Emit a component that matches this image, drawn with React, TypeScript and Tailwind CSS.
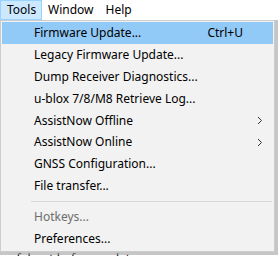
import React from 'react';

type Item = { label: string; shortcut?: string; sub?: boolean; active?: boolean; disabled?: boolean } | 'sep';

const ITEMS: Item[] = [
  { label: 'Firmware Update...', shortcut: 'Ctrl+U', active: true },
  { label: 'Legacy Firmware Update...' },
  { label: 'Dump Receiver Diagnostics...' },
  { label: 'u-blox 7/8/M8 Retrieve Log...' },
  { label: 'AssistNow Offline', sub: true },
  { label: 'AssistNow Online', sub: true },
  { label: 'GNSS Configuration...' },
  { label: 'File transfer...' },
  'sep',
  { label: 'Hotkeys...', disabled: true },
  { label: 'Preferences...' },
];

const Chevron = () => (
  <svg width="6" height="9" viewBox="0 0 6 9" className="text-[#333]">
    <path d="M1 1 L4.5 4.5 L1 8" fill="none" stroke="currentColor" strokeWidth="1" />
  </svg>
);

export default function App() {
  return (
    <div className="relative w-[278px] h-[256px] overflow-hidden bg-white text-[12px] text-black" style={{ fontFamily: '"Segoe UI", "Noto Sans", sans-serif' }}>
      <div className="flex h-[20px] items-stretch">
        <div className="flex items-center px-[6px] bg-[#cce8ff] border border-[#99d1ff] w-[42px]">Tools</div>
        <div className="flex items-center px-[6px]">Window</div>
        <div className="flex items-center px-[6px]">Help</div>
      </div>

      <div className="absolute left-0 top-[253px] pl-[4px] text-[12px] leading-none text-black">safeboot before update</div>

      <div className="absolute left-0 top-[20px] w-[278px] h-[235px] bg-[#a0a0a0]/60 pr-[2px] pb-[2px]" >
        <div className="w-[275px] h-[232px] bg-[#f2f2f2] border border-[#cccccc] p-[1px] flex flex-col">
          {ITEMS.map((it, i) =>
            it === 'sep' ? (
              <div key={i} className="h-[9px] flex items-center pl-[29px] pr-[1px]">
                <div className="h-px w-full bg-[#d7d7d7]" />
              </div>
            ) : (
              <div
                key={i}
                className={`h-[22px] flex items-center pl-[32px] pr-[10px] ${it.active ? 'bg-[#91c9f7]' : ''} ${it.disabled ? 'text-[#6d6d6d]' : ''}`}
              >
                <span className="flex-1">{it.label}</span>
                {it.shortcut && <span className="mr-[20px]">{it.shortcut}</span>}
                {it.sub && <Chevron />}
              </div>
            )
          )}
        </div>
      </div>
    </div>
  );
}
